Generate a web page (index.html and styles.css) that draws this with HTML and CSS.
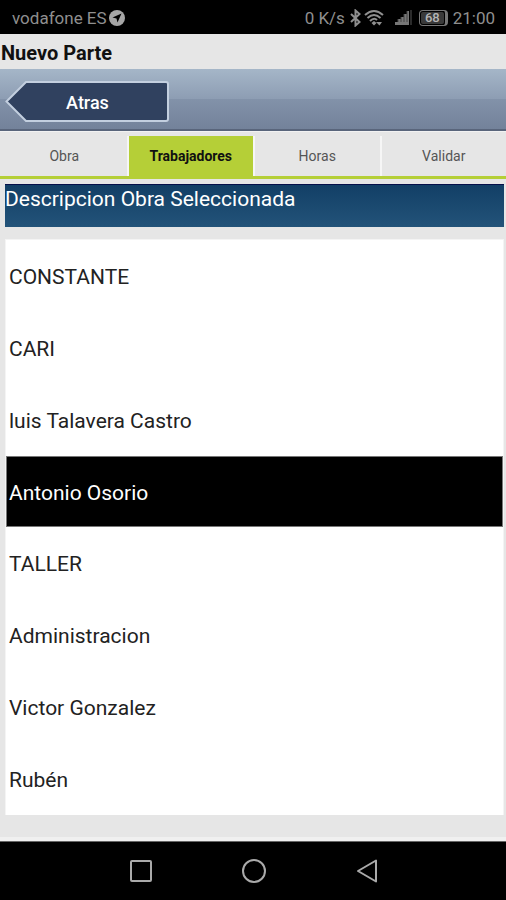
FILE: index.html
```html
<!DOCTYPE html>
<html lang="es">
<head>
    <meta charset="UTF-8">
    <meta name="viewport" content="width=device-width, initial-scale=1.0">
    <title>Nuevo Parte</title>
    <link rel="stylesheet" href="styles.css">
</head>
<body>

    <div class="status-bar">
        <div class="status-left">
            <span>vodafone ES</span>
            <svg width="16" height="16" viewBox="0 0 16 16">
                <circle cx="8" cy="8" r="8" fill="#a6a6a6"/>
                <path d="M12.5 3.5 L3.5 7.5 L7.5 8.5 L8.5 12.5 Z" fill="#000"/>
            </svg>
        </div>
        <div class="status-right">
            <span>0 K/s</span>
            <svg class="bluetooth" width="11" height="18" viewBox="0 0 11 18">
                <path d="M1 5 L9.5 13 L5.5 16.5 V1.5 L9.5 5 L1 13" fill="none" stroke="#8f8f8f" stroke-width="2"/>
            </svg>
            <svg class="wifi" width="20" height="18" viewBox="0 0 20 18">
                <g fill="none" stroke="#8f8f8f" stroke-width="2">
                    <path d="M1 6 Q10 -2 19 6"/>
                    <path d="M3.5 9 Q10 3 16.5 9"/>
                    <path d="M6 12 Q10 8 13 11"/>
                </g>
                <path d="M7.5 14 L10 12 L12.5 14 L10 16.5 Z M12 13 H18 L15.5 16.5 Z" fill="#8f8f8f"/>
            </svg>
            <svg class="signal" width="17" height="16" viewBox="0 0 17 16">
                <path d="M0 15 V12 H3 V9 H6 V7 H9 V4 H12 V1 H14 V15 Z" fill="#777"/>
                <path d="M3 9 V12 M6 7 V12 M9 4 V12 M12 1 V12" stroke="#444" stroke-width="1"/>
                <path d="M15 0 H17 V15 H15 Z" fill="#2b2b2b"/>
            </svg>
            <span class="battery"><span class="battery-level">68</span></span>
            <span>21:00</span>
        </div>
    </div>

    <h1 class="page-title">Nuevo Parte</h1>

    <header class="toolbar">
        <button class="back-btn" type="button">
            <svg class="back-shape" viewBox="0 0 164 44" preserveAspectRatio="none">
                <path d="M1.5 22 L21 2 H161 Q163 2 163 4 V40 Q163 42 161 42 H21 Z" fill="#30415f" stroke="#c3cfdf" stroke-width="2"/>
            </svg>
            <span class="back-label">Atras</span>
        </button>
    </header>

    <nav class="tabs">
        <a class="tab" href="#obra">Obra</a>
        <a class="tab active" href="#trabajadores">Trabajadores</a>
        <a class="tab" href="#horas">Horas</a>
        <a class="tab" href="#validar">Validar</a>
    </nav>

    <main class="content">
        <h2 class="banner">Descripcion Obra Seleccionada</h2>

        <!-- Worker list -->
        <div class="worker-list">
            <button class="worker" type="button">CONSTANTE</button>
            <button class="worker" type="button">CARI</button>
            <button class="worker" type="button">luis Talavera Castro</button>
            <button class="worker selected" type="button">Antonio Osorio</button>
            <button class="worker" type="button">TALLER</button>
            <button class="worker" type="button">Administracion</button>
            <button class="worker" type="button">Victor Gonzalez</button>
            <button class="worker" type="button">Rubén</button>
        </div>
    </main>

    <div class="nav-bar">
        <button class="nav-btn" type="button" aria-label="Recientes">
            <svg width="26" height="26" viewBox="0 0 26 26">
                <rect x="3" y="3" width="20" height="20" rx="1" fill="none" stroke="#aaa" stroke-width="2"/>
            </svg>
        </button>
        <button class="nav-btn" type="button" aria-label="Inicio">
            <svg width="26" height="26" viewBox="0 0 26 26">
                <circle cx="13" cy="13" r="11" fill="none" stroke="#aaa" stroke-width="2"/>
            </svg>
        </button>
        <button class="nav-btn" type="button" aria-label="Volver">
            <svg width="26" height="26" viewBox="0 0 26 26">
                <path d="M4 13 L22 2.5 V23.5 Z" fill="none" stroke="#aaa" stroke-width="2" stroke-linejoin="round"/>
            </svg>
        </button>
    </div>

</body>
</html>
```
FILE: styles.css
```css
* {
    box-sizing: border-box;
}
body {
    margin: 0;
    min-height: 100vh;
    display: flex;
    flex-direction: column;
    font-family: Roboto, sans-serif;
    background-color: #e6e6e6;
    color: #111;
}
button {
    border: none;
    padding: 0;
    background: none;
    font-family: inherit;
    cursor: pointer;
}
.status-bar {
    display: flex;
    justify-content: space-between;
    align-items: center;
    height: 34px;
    padding: 2px 11px 0 12px;
    background-color: #000;
    color: #8f8f8f;
    font-size: 17px;
}
.status-left,
.status-right {
    display: flex;
    align-items: center;
}
.status-left {
    gap: 2px;
}
.bluetooth {
    margin-left: 5px;
}
.wifi {
    margin-left: 3px;
}
.signal {
    margin-left: 11px;
}
.battery {
    display: flex;
    margin: 0 5px 0 7px;
    padding: 1px;
    border: 1px solid #777;
    border-right-width: 3px;
    border-radius: 4px;
}
.battery-level {
    padding: 0 4px;
    border-radius: 2px;
    background-color: #3a3a3a;
    color: #b5b5b5;
    font-size: 13px;
    font-weight: 500;
    line-height: 12px;
}
.page-title {
    margin: 0;
    padding: 8px 1px 5px;
    font-size: 20px;
    line-height: 22px;
    font-weight: 700;
}
.toolbar {
    padding: 11px 5px 6px;
    border-bottom: 2px solid #59657b;
    background: linear-gradient(#a5b6c8, #8d9db3 50%, #8292a9 50%, #73829a);
}
.back-btn {
    position: relative;
    display: block;
    width: 164px;
    height: 43px;
    padding: 1px 0 0 1px;
    color: #fff;
    font-size: 18px;
    font-weight: 500;
}
.back-shape {
    position: absolute;
    top: 0;
    left: 0;
    width: 100%;
    height: 100%;
}
.back-label {
    position: relative;
}
.tabs {
    display: grid;
    grid-template-columns: repeat(4, 1fr);
    padding-top: 4px;
    border-top: 1px solid #f2f2f2;
    border-bottom: 3px solid #b5cf37;
}
.tab {
    padding: 12px 0;
    border-left: 2px solid #f6f6f6;
    color: #555;
    font-size: 14px;
    line-height: 16px;
    text-align: center;
    text-decoration: none;
}
.tab:first-child {
    border-left-color: transparent;
}
.tab.active {
    background-color: #b5cf37;
    background-clip: padding-box;
    color: #111;
    font-weight: 700;
}
.content {
    flex: 1;
    padding: 5px 2px 4px 5px;
    border-bottom: 4px solid #f0f0f0;
}
.banner {
    margin: 0 0 12px;
    padding: 2px 0 16px;
    background: linear-gradient(#123f66, #235379);
    border-top: 1px solid #06104a;
    color: #fff;
    font-size: 21px;
    line-height: 24px;
    font-weight: 400;
}
.worker-list {
    border: 1px solid #f4f4f4;
    border-bottom: none;
    background-color: #fff;
}
.worker {
    display: block;
    width: 100%;
    padding: 25px 3px 23px;
    color: #222;
    font-size: 21px;
    line-height: 24px;
    text-align: left;
}
.worker.selected {
    padding: 24px 2px 21px;
    border: 1px solid #777;
    background-color: #000;
    color: #fff;
}
.nav-bar {
    display: flex;
    justify-content: center;
    gap: 87px;
    padding: 16px 0 16px 1px;
    border-top: 1px solid #666;
    background-color: #000;
}
.nav-btn svg {
    display: block;
}
```
